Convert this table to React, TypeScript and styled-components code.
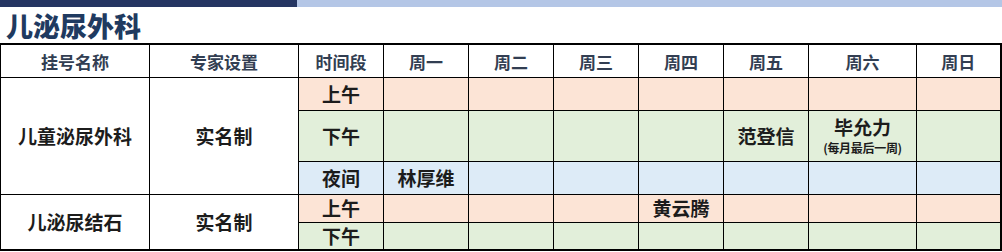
import React from 'react';
import styled, { createGlobalStyle } from 'styled-components';

const GlobalStyle = createGlobalStyle`
  html, body {
    margin: 0;
    padding: 0;
    background: #ffffff;
  }
  body {
    font-family: "Noto Sans CJK SC", "Noto Sans", sans-serif;
  }
`;

const Page = styled.div`
  width: 1002px;
  height: 252px;
  overflow: hidden;
  background: #fff;
`;

const TopBar = styled.div`
  display: flex;
  height: 7px;
`;

const BarSegment = styled.div<{ $dark?: boolean }>`
  flex: ${({ $dark }) => ($dark ? '0 0 297px' : '1')};
  background: ${({ $dark }) => ($dark ? '#253562' : '#b4c6e6')};
`;

const Title = styled.h1`
  margin: 0;
  height: 36px;
  padding-left: 6px;
  display: flex;
  align-items: center;
  font-size: 27px;
  font-weight: 900;
  color: #1f3a60;
`;

const Table = styled.table`
  border-collapse: collapse;
  table-layout: fixed;
  width: 1001px;
  border-top: 2px solid #000;
  border-right: 2px solid #000;
  border-bottom: 2px solid #000;
  border-left: 1px solid #c8c8c8;
`;

const HeadCell = styled.th`
  height: 32px;
  padding: 0;
  border: 1px solid #000;
  border-top: none;
  font-size: 17px;
  font-weight: 700;
  color: #323e52;
  text-align: center;
  vertical-align: middle;
`;

type Tone = 'am' | 'pm' | 'night' | 'plain';

const tones: Record<Tone, string> = {
  am: '#fce4d6',
  pm: '#e2efda',
  night: '#ddebf7',
  plain: '#ffffff',
};

const Cell = styled.td<{ $tone?: Tone; $h?: number }>`
  height: ${({ $h }) => ($h ? `${$h}px` : 'auto')};
  padding: 0;
  border: 1px solid #000;
  background: ${({ $tone }) => tones[$tone ?? 'plain']};
  font-size: 19px;
  font-weight: 700;
  color: #1c1c1c;
  text-align: center;
  vertical-align: middle;
  line-height: 1.2;
`;

const Note = styled.div`
  font-size: 12px;
  font-weight: 700;
  line-height: 1.3;
  margin-top: 2px;
  letter-spacing: -0.3px;
`;

const Big = styled.div`
  font-size: 19px;
  line-height: 1.1;
`;

const widths = [149, 149, 85, 85, 85, 85, 85, 85, 108, 84];
const heads = ['挂号名称', '专家设置', '时间段', '周一', '周二', '周三', '周四', '周五', '周六', '周日'];

type Slot = {
  label: string;
  tone: Tone;
  h: number;
  cells: React.ReactNode[];
};

const empty = (n: number) => Array.from({ length: n }, () => null);

const groupA: Slot[] = [
  { label: '上午', tone: 'am', h: 32, cells: empty(7) },
  {
    label: '下午',
    tone: 'pm',
    h: 50,
    cells: [
      null,
      null,
      null,
      null,
      '范登信',
      <>
        <Big>毕允力</Big>
        <Note>(每月最后一周)</Note>
      </>,
      null,
    ],
  },
  { label: '夜间', tone: 'night', h: 32, cells: ['林厚维', ...empty(6)] },
];

const groupB: Slot[] = [
  { label: '上午', tone: 'am', h: 27, cells: [null, null, null, '黄云腾', null, null, null] },
  { label: '下午', tone: 'pm', h: 26, cells: empty(7) },
];

function Group({ name, slots }: { name: string; slots: Slot[] }) {
  return (
    <>
      {slots.map((slot, i) => (
        <tr key={i}>
          {i === 0 && (
            <>
              <Cell rowSpan={slots.length}>{name}</Cell>
              <Cell rowSpan={slots.length}>实名制</Cell>
            </>
          )}
          <Cell $tone={slot.tone} $h={slot.h}>
            {slot.label}
          </Cell>
          {slot.cells.map((c, j) => (
            <Cell key={j} $tone={slot.tone}>
              {c}
            </Cell>
          ))}
        </tr>
      ))}
    </>
  );
}

export default function App() {
  return (
    <Page>
      <GlobalStyle />
      <TopBar>
        <BarSegment $dark />
        <BarSegment />
      </TopBar>
      <Title>儿泌尿外科</Title>
      <Table>
        <colgroup>
          {widths.map((w, i) => (
            <col key={i} style={{ width: w }} />
          ))}
        </colgroup>
        <thead>
          <tr>
            {heads.map((h) => (
              <HeadCell key={h}>{h}</HeadCell>
            ))}
          </tr>
        </thead>
        <tbody>
          <Group name="儿童泌尿外科" slots={groupA} />
          <Group name="儿泌尿结石" slots={groupB} />
        </tbody>
      </Table>
    </Page>
  );
}
